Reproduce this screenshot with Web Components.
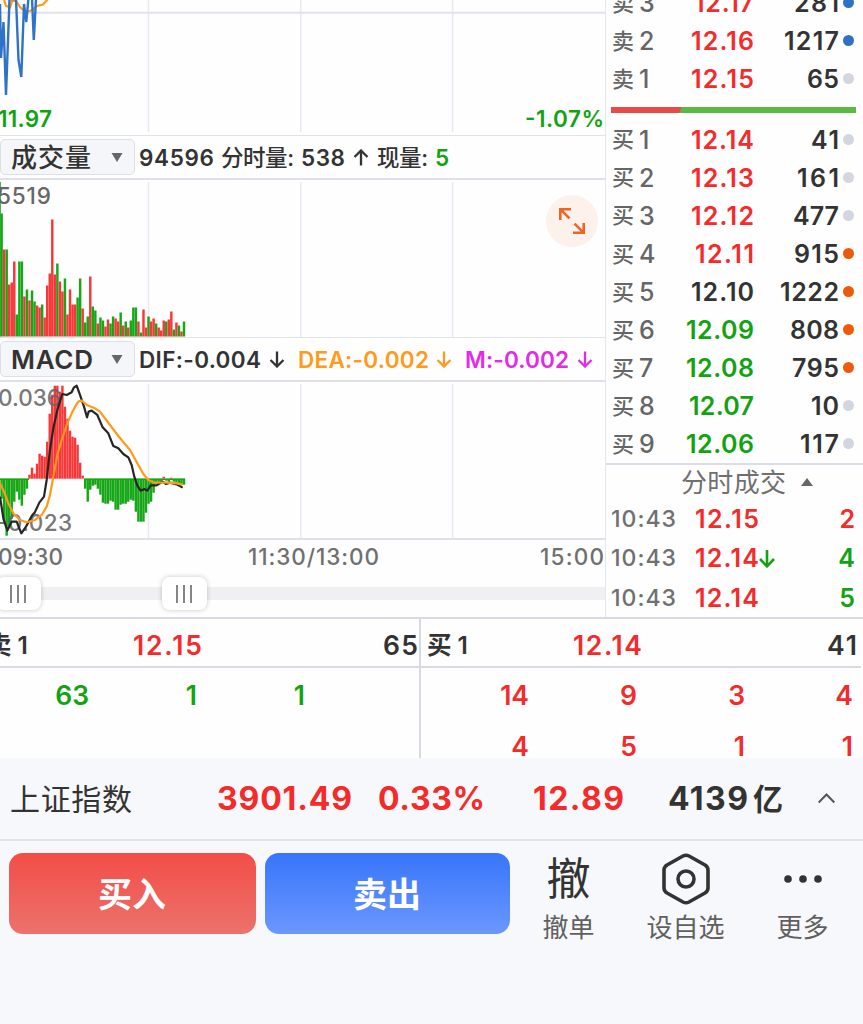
<!DOCTYPE html>
<html lang="zh-CN">
<head>
<meta charset="utf-8">
<title>分时行情</title>
<style>
  body {
    margin: 0;
    width: 863px;
    height: 1024px;
    overflow: hidden;
    background: #f7f8fb;
    color: #333;
    font-family: Inter, "Noto Sans CJK SC", sans-serif;
    font-weight: 600;
  }
</style>
</head>
<body>
<trade-page></trade-page>

<script>
const RED = '#f52a2a';
const GREEN = '#12a312';
const DARK = '#333';
const ORANGE = '#ff9a1a';

// text that spreads its letters over a given width
class FitText extends HTMLElement {
  connectedCallback() {
    const width = Number(this.getAttribute('w'));
    const root = this.attachShadow({mode: 'open'});
    root.innerHTML = `<style>
        :host { display: inline-block; flex: none; white-space: nowrap; width: ${width}px; }
        span { display: inline-block; }
      </style><span><slot></slot></span>`;
    const span = root.querySelector('span');
    const count = [...this.textContent].length;
    const natural = span.getBoundingClientRect().width;
    if (count > 1) {
      const spacing = (width - natural) / (count - 1);
      span.style.letterSpacing = spacing + 'px';
      span.style.marginRight = -spacing + 'px';
    }
  }
}

class OrderRow extends HTMLElement {
  connectedCallback() {
    const [side, level, price, pw, color, qty, qw, dot] = this.getAttribute('data').split(',');
    this.attachShadow({mode: 'open'}).innerHTML = `
      <style>
        :host {
          display: grid;
          grid-template-columns: 27px 40px 75px 85px 15px;
          height: 38.1px;
          padding-left: 6px;
          align-items: center;
          font-size: 25px;
          line-height: 38px;
          color: #333;
        }
        .side { font-size: 22px; color: #666; font-weight: 500; margin-top: -1px; }
        .level { color: #666; font-weight: 500; }
        .price { text-align: right; color: ${color}; }
        .qty { text-align: right; }
        i { width: 11px; height: 11px; border-radius: 50%; background: ${dot}; margin-left: 4px; margin-top: -1px; }
      </style>
      <span class="side">${side}</span>
      <span class="level">${level}</span>
      <span class="price"><fit-text w="${pw}">${price}</fit-text></span>
      <span class="qty"><fit-text w="${qw}">${qty}</fit-text></span>
      <i></i>
    `;
  }
}

class RatioBar extends HTMLElement {
  connectedCallback() {
    this.attachShadow({mode: 'open'}).innerHTML = `
      <style>
        :host { display: block; height: 6px; margin: 8.8px 7px 7px 5px; background: #5aba46; }
        div { width: 71px; height: 6px; background: #e84a48; clip-path: polygon(0 0, 100% 0, 68px 100%, 0 100%); }
      </style>
      <div></div>
    `;
  }
}

class TickRow extends HTMLElement {
  connectedCallback() {
    const [time, price, arrow, qty, color] = this.getAttribute('data').split(',');
    this.attachShadow({mode: 'open'}).innerHTML = `
      <style>
        :host { display: flex; height: 39.4px; line-height: 39.4px; padding: 0 8px 0 5px; font-size: 25px; }
        .time { color: #707070; font-size: 23px; width: 84px; font-weight: 500; }
        .price { color: ${RED}; }
        svg { margin-top: 11px; }
        .qty { margin-left: auto; color: ${color}; }
      </style>
      <span class="time"><fit-text w="65">${time}</fit-text></span>
      <span class="price"><fit-text w="64">${price}</fit-text></span>
      ${arrow ? `<svg width="16" height="18" fill="none" stroke="${GREEN}" stroke-width="2.6"><path d="M8 0V16M1 9l7 7.3L15 9"/></svg>` : ''}
      <span class="qty">${qty}</span>
    `;
  }
}

class OrderBook extends HTMLElement {
  connectedCallback() {
    const BLUE = '#2f72c4', GREY = '#d3d6de', HOT = '#ee5a0a';
    const sells = [
      ['卖', 3, '12.17', 60, RED, 281, 45, BLUE],
      ['卖', 2, '12.16', 63, RED, 1217, 55, BLUE],
      ['卖', 1, '12.15', 63, RED, 65, 32, GREY]
    ];
    const buys = [
      ['买', 1, '12.14', 63, RED, 41, 28, GREY],
      ['买', 2, '12.13', 63, RED, 161, 42, GREY],
      ['买', 3, '12.12', 63, RED, 477, 46, GREY],
      ['买', 4, '12.11', 59, RED, 915, 45, HOT],
      ['买', 5, '12.10', 63, DARK, 1222, 59, HOT],
      ['买', 6, '12.09', 68, GREEN, 808, 49, HOT],
      ['买', 7, '12.08', 68, GREEN, 795, 47, HOT],
      ['买', 8, '12.07', 65, GREEN, 10, 28, GREY],
      ['买', 9, '12.06', 68, GREEN, 117, 39, GREY]
    ];
    const rows = list => list.map(r => `<order-row data="${r.join(',')}"></order-row>`).join('');
    this.attachShadow({mode: 'open'}).innerHTML = `
      <style>
        :host { display: block; height: 617px; overflow: hidden; border-left: 1px solid #e6e7ee; box-sizing: border-box; }
        .sells { margin-top: -16px; }
        .buys { height: 342.3px; padding-top: .6px; }
        .title {
          display: flex;
          align-items: center;
          height: 35px;
          padding-left: 75px;
          border-top: 2px solid #dcdde6;
          font-size: 26px;
          line-height: 35px;
          color: #707070;
          font-weight: 400;
        }
        .title svg { margin-left: 15px; }
      </style>
      <div class="sells">${rows(sells)}</div>
      <ratio-bar></ratio-bar>
      <div class="buys">${rows(buys)}</div>
      <div class="title"><fit-text w="105">分时成交</fit-text><svg width="12" height="8"><path d="M6 0l6 8H0z" fill="#666"/></svg></div>
      <tick-row data="10:43,12.15,,2,${RED}"></tick-row>
      <tick-row data="10:43,12.14,1,4,${GREEN}"></tick-row>
      <tick-row data="10:43,12.14,,5,${GREEN}"></tick-row>
    `;
  }
}

// dropdown with the indicator's name, followed by its values
class IndicatorBar extends HTMLElement {
  connectedCallback() {
    this.attachShadow({mode: 'open'}).innerHTML = `
      <style>
        :host {
          display: flex;
          align-items: center;
          box-sizing: border-box;
          height: 45px;
          border-top: 1px solid #e2e3ea;
          border-bottom: 2px solid #dfe0e8;
          font-size: 22.5px;
          line-height: 42px;
        }
        .picker {
          display: flex;
          flex: none;
          align-items: center;
          justify-content: space-between;
          box-sizing: border-box;
          width: 135px;
          height: 36px;
          padding: 2px 11px 0 10px;
          margin-right: 4px;
          border: 1px solid #dddfe5;
          border-radius: 5px;
          background: #f5f6f9;
          font-size: 26px;
        }
        .values { display: flex; padding-top: 1px; }
      </style>
      <div class="picker"><slot name="name"></slot><svg width="12" height="10"><path d="M0.5 0h11L6 9z" fill="#666"/></svg></div>
      <div class="values"><slot></slot></div>
    `;
  }
}

class ArrowMark extends HTMLElement {
  connectedCallback() {
    const up = this.hasAttribute('up');
    this.attachShadow({mode: 'open'}).innerHTML = `
      <style>
        :host { display: flex; flex: none; align-items: center; width: 16px; }
        svg { ${up ? 'transform: rotate(180deg);' : ''} }
      </style>
      <svg width="16" height="17" fill="none" stroke="currentColor" stroke-width="2.3"><path d="M8 0.5V15.5M1.5 9L8 15.5L14.5 9"/></svg>
    `;
  }
}

const grid = (top, bottom) => [148.5, 300.8, 452.6]
  .map(x => `<path d="M${x} ${top}V${bottom}" stroke="#e9eaf1" stroke-width="1.6"/>`).join('');

const chartStyle = `
  <style>
    :host { display: block; }
    svg { display: block; }
    text { font: 600 22.5px Inter, sans-serif; }
    .dim { font-weight: 500; fill: #666; }
  </style>
`;

class PriceChart extends HTMLElement {
  connectedCallback() {
    this.attachShadow({mode: 'open'}).innerHTML = `${chartStyle}
      <svg width="605" height="135">
        ${grid(0, 132)}
        <path d="M0 12.8H605" stroke="#e0e2ec" stroke-width="2"/>
        <path d="M4 0L6 6L10 7.3L12 1H16L20 7L26 12.5L32 10L37 6L43 4.5L48 -1" fill="none" stroke="${ORANGE}" stroke-width="2.2"/>
        <path d="M0 4L1 58L3.5 22L6 95L9.5 -1L16 -1L18.5 60L21.3 77L24 4L26.3 22L28.5 -2L32 -2L33.8 40L36 -1" fill="none" stroke="#2f73c8" stroke-width="2.4"/>
        <text x="-2" y="126.7" textLength="54" fill="${GREEN}">11.97</text>
        <text x="525" y="126.7" textLength="79" fill="${GREEN}">-1.07%</text>
      </svg>
    `;
  }
}

const STEP = 2.533;

class VolumeChart extends HTMLElement {
  connectedCallback() {
    const volumes = `123g 87r 87g 52r 54r 75r 22g 75g 75g 40r 47g 36r 46g 35g 31r 29r 32g 19r 51r 63r
      117r 62r 73g 55r 45r 58g 22r 47r 32r 32r 39g 58g 28r 14g 20g 60r 30g 26g 13r 19g
      16g 10r 17r 13g 20g 18r 15r 24g 11r 15g 9r 16g 29g 29g 15r 4g 27r 9r 20g 15r
      18r 13g 9r 6r 16r 15g 17r 25r 7g 14r 11g 5r 15g`.split(/\s+/);
    const bars = volumes.map((v, i) => {
      const h = parseInt(v);
      const color = v.endsWith('r') ? '#f83838' : '#16a716';
      return `<rect x="${(i * STEP + 0.4).toFixed(2)}" y="${156.5 - h}" width="2.45" height="${h}" fill="${color}"/>`;
    }).join('');
    this.attachShadow({mode: 'open'}).innerHTML = `${chartStyle}
      <style>
        :host { position: relative; }
        button {
          position: absolute;
          left: 546px;
          top: 15px;
          width: 52px;
          height: 52px;
          padding: 0;
          border: 0;
          border-radius: 50%;
          background: #fdf1ec;
        }
      </style>
      <svg width="605" height="157">
        ${grid(2, 157)}
        <rect x="0" y="2" width="0.8" height="154.5" fill="#16a716"/>
        ${bars}
        <text class="dim" x="-3" y="23.5" textLength="54">5519</text>
      </svg>
      <button><svg width="52" height="52" fill="none" stroke="#ef6424" stroke-width="2.6"><path d="M14.3 25V14.2H25M14.8 14.7L23.5 23.4M37.7 28V37.8H27M37.2 37.3L28.5 28.6"/></svg></button>
    `;
  }
}

class MacdChart extends HTMLElement {
  connectedCallback() {
    // positive values are drawn in red above the zero line
    const values = [-20, -43, -57, -48, -40, -23, -13, -21, -27, -16, -10, 4, 11, 5, 15, 25, 23, 22, 37, 65,
      84, 93, 93, 87, 93, 72, 60, 48, 42, 41, 34, 16, 3, -10, -23, -11, -7, -6, -10, -16,
      -24, -25, -25, -22, -23, -31, -31, -26, -25, -25, -23, -21, -22, -33, -43, -43, -43, -34, -25, -23,
      -14, -5, -5, -4, 2, -2, -3, 1, -3, -4, -5, -6, -6];
    const bars = values.map((v, i) => `<rect x="${(i * STEP + 0.4).toFixed(2)}" y="${v > 0 ? 96.7 - v : 96.7}"
      width="2.42" height="${Math.abs(v)}" fill="${v > 0 ? '#f83838' : '#16a716'}"/>`).join('');
    this.attachShadow({mode: 'open'}).innerHTML = `${chartStyle}
      <svg width="605" height="156">
        ${grid(2, 156)}
        <path d="M0 97.3H29M84 97.3H185" stroke="#16a716" stroke-width="1.6"/>
        ${bars}
        <text class="dim" x="-2" y="23.6" textLength="63" fill-opacity=".9">0.036</text>
        <text class="dim" x="-3" y="149" textLength="75" fill-opacity=".9">-0.023</text>
        <path transform="translate(0 -42) scale(.3333)" stroke-width="6.6" fill="none" stroke="#262626" stroke-linejoin="round"
          d="M0 470L10 535L22 572L35 545L50 545L64 580L78 560L97 525L104 518L118 488L132 470L140 420L150 330L160 265L172 210L187 162L200 165L215 157L222 142L230 137L240 165L252 200L261 232L266 215L275 212L292 225L308 262L325 280L340 318L355 325L370 342L385 352L395 375L403 410L412 437L422 452L433 447L442 452L452 436L470 436L488 425L498 432L510 428L530 433L548 443"/>
        <path transform="translate(0 -42) scale(.3333)" stroke-width="6.6" fill="none" stroke="${ORANGE}" stroke-linejoin="round"
          d="M0 430L12 455L25 490L40 520L60 540L80 547L105 540L125 525L140 500L150 465L160 410L172 345L185 300L200 255L215 220L228 195L236 184L246 182L260 195L285 205L300 215L330 255L355 288L390 330L415 375L430 402L445 420L460 427L500 428L530 430L548 434"/>
      </svg>
    `;
  }
}

class TimeSlider extends HTMLElement {
  connectedCallback() {
    this.attachShadow({mode: 'open'}).innerHTML = `
      <style>
        :host { display: block; border-top: 2px solid #dfe0e8; height: 77px; }
        .axis { display: flex; justify-content: space-between; height: 34px; line-height: 34px; margin-left: -2px; padding-right: 1px; font-size: 22.5px; font-weight: 500; color: #707070; }
        .axis fit-text:nth-child(2) { margin-left: 24px; }
        .track { position: relative; height: 13px; margin-top: 13px; background: #f0f0f3; }
        .knob {
          position: absolute;
          top: -10px;
          display: flex;
          align-items: center;
          justify-content: center;
          gap: 5px;
          box-sizing: border-box;
          width: 45px;
          height: 33px;
          padding-right: 1px;
          border-radius: 8px;
          background: #fff;
          box-shadow: 0 0 5px rgba(0, 0, 0, .22);
        }
        .knob i { width: 2px; height: 18px; background: #858585; }
      </style>
      <div class="axis"><fit-text w="65">09:30</fit-text><fit-text w="131">11:30/13:00</fit-text><fit-text w="64">15:00</fit-text></div>
      <div class="track">
        <div class="knob" style="left:-4px"><i></i><i></i><i></i></div>
        <div class="knob" style="left:162px"><i></i><i></i><i></i></div>
      </div>
    `;
  }
}

class QueuePanel extends HTMLElement {
  connectedCallback() {
    const cells = this.getAttribute('cells').split(',');
    const color = this.getAttribute('color');
    this.attachShadow({mode: 'open'}).innerHTML = `
      <style>
        :host { display: flex; flex-direction: column; height: 139px; overflow: hidden; font-size: 26.5px; }
        header { display: grid; grid-template-columns: 1fr auto 1fr; flex: none; height: 47px; line-height: 53px; border-bottom: 2px solid #d8d9e2; padding: var(--head-pad); }
        .name { display: flex; font-size: 24.5px; gap: 6px; }
        .price { color: ${RED}; margin-left: var(--price-shift); }
        .qty { text-align: right; }
        .cells { display: grid; grid-template-columns: repeat(4, 108px); justify-content: end; margin-right: var(--cell-shift); color: ${color}; text-align: right; line-height: 51px; padding-top: 2px; }
      </style>
      <header><span class="name"><slot name="side"></slot><slot name="level"></slot></span><span class="price"><slot name="price"></slot></span><span class="qty"><slot name="qty"></slot></span></header>
      <div class="cells">${cells.map(c => `<span>${c}</span>`).join('')}</div>
    `;
  }
}

class IndexBar extends HTMLElement {
  connectedCallback() {
    this.attachShadow({mode: 'open'}).innerHTML = `
      <style>
        :host { display: flex; align-items: center; height: 81px; border-bottom: 2px solid #e3e4e9; font-size: 32px; font-weight: 700; line-height: 82px; }
        .name { font-size: 30px; font-weight: 400; margin: 0 85px 0 10px; }
        .up { color: ${RED}; }
        .yi { font-size: 30px; margin: 0 35px 0 5px; }
      </style>
      <fit-text class="name" w="122">上证指数</fit-text>
      <fit-text class="up" w="135">3901.49</fit-text>
      <fit-text class="up" w="107" style="margin-left:26px">0.33%</fit-text>
      <fit-text class="up" w="91" style="margin-left:48px">12.89</fit-text>
      <fit-text w="80" style="margin-left:44px">4139</fit-text>
      <fit-text class="yi" w="30">亿</fit-text>
      <svg width="17" height="11" fill="none" stroke="#555" stroke-width="2"><path d="M0.7 9.5L8.5 1.5L16.3 9.5"/></svg>
    `;
  }
}

class TradeButton extends HTMLElement {
  connectedCallback() {
    this.attachShadow({mode: 'open'}).innerHTML = `
      <style>
        :host { display: block; height: 81px; }
        button {
          width: 100%;
          height: 100%;
          padding: 3px 1px 0 0;
          border: 0;
          border-radius: 14px;
          background: ${this.getAttribute('fill')};
          color: #fff;
          font: 700 34px/78px Inter, "Noto Sans CJK SC", sans-serif;
        }
      </style>
      <button><slot></slot></button>
    `;
  }
}

class ToolItem extends HTMLElement {
  connectedCallback() {
    this.attachShadow({mode: 'open'}).innerHTML = `
      <style>
        :host { display: flex; flex-direction: column; align-items: center; }
        .icon { height: 52px; line-height: 53px; font-size: 44px; font-weight: 400; }
        .label { height: 44px; line-height: 45px; font-size: 26px; font-weight: 400; color: #606060; }
      </style>
      <div class="icon"><slot name="icon"></slot></div>
      <div class="label"><slot></slot></div>
    `;
  }
}

class TradePage extends HTMLElement {
  connectedCallback() {
    this.attachShadow({mode: 'open'}).innerHTML = `
      <style>
        :host { display: block; background: #f7f8fb; }
        .market { display: grid; grid-template-columns: 605px 258px; height: 617px; background: #fefefe; overflow: hidden; }
        .charts { overflow: hidden; }
        .queues {
          display: grid;
          grid-template-columns: 419px 440px;
          column-gap: 2px;
          height: 139px;
          padding-right: 2px;
          border-top: 2px solid #d8d9e2;
          background: linear-gradient(90deg, #fefefe 419px, #d8d9e2 419px, #d8d9e2 421px, #fefefe 421px);
        }
        .queues > :first-child { --head-pad: 0 1px 0 0; --cell-shift: 6px; --price-shift: -76px; }
        .queues > :last-child { --head-pad: 0 4px 0 6px; --cell-shift: 8px; --price-shift: -69px; }
        footer { display: grid; grid-template-columns: 247px 254px 117px 117px 117px; padding: 12px 0 0 9px; }
        footer trade-button:nth-child(2) { margin-left: 9px; }
        tool-item svg { display: block; }
        .pick { font-weight: 500; }
      </style>
      <div class="market">
        <div class="charts">
          <price-chart></price-chart>
          <indicator-bar>
            <fit-text slot="name" class="pick" w="80">成交量</fit-text>
            <fit-text w="75">94596</fit-text>
            <fit-text class="pick" w="73" style="margin-left:7px">分时量:</fit-text>
            <fit-text w="44" style="margin-left:7px">538</fit-text>
            <arrow-mark up style="margin-left:8px"></arrow-mark>
            <fit-text class="pick" w="51" style="margin-left:8px">现量:</fit-text>
            <fit-text w="14" style="margin-left:7px;color:${GREEN}">5</fit-text>
          </indicator-bar>
          <volume-chart></volume-chart>
          <indicator-bar>
            <fit-text slot="name" w="82">MACD</fit-text>
            <fit-text w="122">DIF:-0.004</fit-text>
            <arrow-mark style="margin-left:8px"></arrow-mark>
            <fit-text w="131" style="margin-left:13px;color:${ORANGE}">DEA:-0.002</fit-text>
            <arrow-mark style="margin-left:7px;color:${ORANGE}"></arrow-mark>
            <fit-text w="104" style="margin-left:13px;color:#e22be8">M:-0.002</fit-text>
            <arrow-mark style="margin-left:8px;color:#e22be8"></arrow-mark>
          </indicator-bar>
          <macd-chart></macd-chart>
          <time-slider></time-slider>
        </div>
        <order-book></order-book>
      </div>
      <div class="queues">
        <queue-panel cells="63,1,1," color="${GREEN}">
          <span slot="side" style="margin-left:-13px">卖</span><span slot="level">1</span>
          <fit-text slot="price" w="69">12.15</fit-text>
          <fit-text slot="qty" w="35">65</fit-text>
        </queue-panel>
        <queue-panel cells="14,9,3,4,4,5,1,1" color="${RED}">
          <span slot="side">买</span><span slot="level">1</span>
          <fit-text slot="price" w="69">12.14</fit-text>
          <fit-text slot="qty" w="30">41</fit-text>
        </queue-panel>
      </div>
      <index-bar></index-bar>
      <footer>
        <trade-button fill="linear-gradient(#f34d47, #ec726d)">买入</trade-button>
        <trade-button fill="linear-gradient(#3875fa, #6b97ff)">卖出</trade-button>
        <tool-item><span slot="icon">撤</span>撤单</tool-item>
        <tool-item>
          <svg slot="icon" width="50" height="52" fill="none" stroke="#333" stroke-width="3.6" stroke-linejoin="round"><path d="M22 3L6 12Q3 14 3 17V35Q3 38 6 40L22 49Q25 50.5 28 49L44 40Q47 38 47 35V17Q47 14 44 12L28 3Q25 1.5 22 3Z"/><circle cx="25" cy="26" r="8"/></svg>
          设自选
        </tool-item>
        <tool-item>
          <svg slot="icon" width="40" height="52" fill="#333"><circle cx="5" cy="26" r="3.8"/><circle cx="20" cy="26" r="3.8"/><circle cx="35" cy="26" r="3.8"/></svg>
          更多
        </tool-item>
      </footer>
    `;
  }
}

customElements.define('fit-text', FitText);
customElements.define('arrow-mark', ArrowMark);
customElements.define('order-row', OrderRow);
customElements.define('ratio-bar', RatioBar);
customElements.define('tick-row', TickRow);
customElements.define('order-book', OrderBook);
customElements.define('indicator-bar', IndicatorBar);
customElements.define('price-chart', PriceChart);
customElements.define('volume-chart', VolumeChart);
customElements.define('macd-chart', MacdChart);
customElements.define('time-slider', TimeSlider);
customElements.define('queue-panel', QueuePanel);
customElements.define('index-bar', IndexBar);
customElements.define('trade-button', TradeButton);
customElements.define('tool-item', ToolItem);
customElements.define('trade-page', TradePage);
</script>
</body>
</html>
